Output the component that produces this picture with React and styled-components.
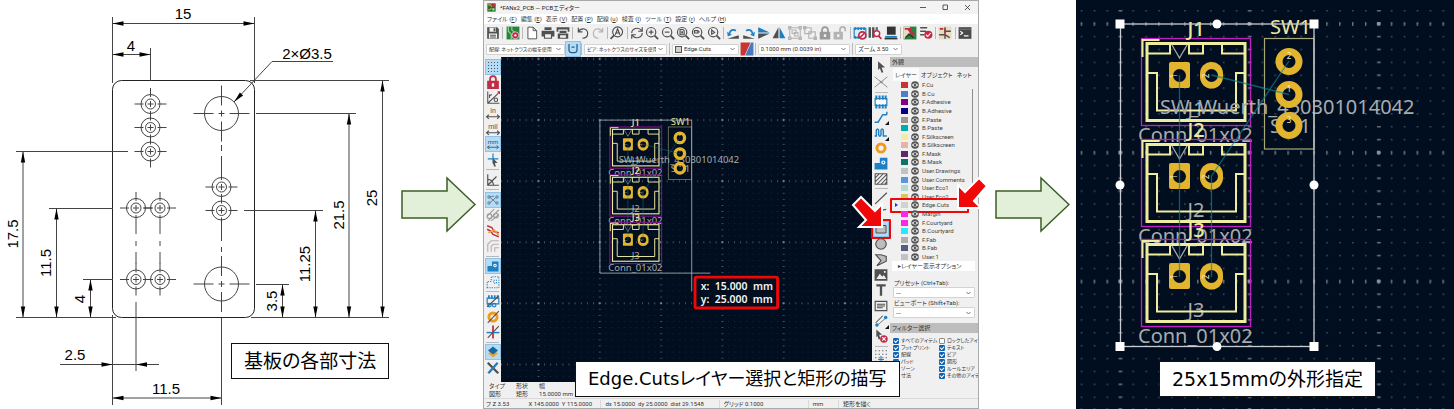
import React from 'react';
import styled, { createGlobalStyle, css } from 'styled-components';

const Global = createGlobalStyle`
  * { box-sizing: border-box; }
  body { margin: 0; background: #fff; font-family: "Roboto", "Noto Sans CJK JP", sans-serif; color: #333; }
  button, select, input { font: inherit; color: inherit; margin: 0; padding: 0; }
  svg { display: block; }
`;

/* ---------- page ---------- */

const Page = styled.main`
  display: flex;
  align-items: stretch;
  min-height: 100vh;
  overflow: hidden;
`;

const Panel = styled.figure`
  position: relative;
  flex: ${(p) => p.$grow} 1 0;
  min-width: 0;
  margin: 0;
  background: ${(p) => p.$bg || 'transparent'};
`;

const Caption = styled.figcaption`
  position: absolute;
  bottom: ${(p) => p.$bottom}px;
  left: ${(p) => p.$left}px;
  padding: 0 12px;
  border: 1px solid #111;
  background: #fff;
  color: #000;
  font-family: "DejaVu Sans", "Noto Sans CJK JP", sans-serif;
  font-size: ${(p) => (p.$long ? 18 : 19)}px;
  line-height: 34px;
  font-feature-settings: "palt";
  white-space: nowrap;
`;

const FullSvg = styled.svg`
  width: 100%;
  height: 100%;
`;

const StepArrowBox = styled.div`
  flex: none;
  align-self: center;
  margin: 0 ${(p) => p.$after}px 0 ${(p) => p.$before}px;
`;

const StepArrow = ({ before, after }) => (
  <StepArrowBox $before={before} $after={after}>
    <svg width="75" height="57" viewBox="0 0 75 57" aria-hidden="true">
      <path d="M1 15H46V2L74 28.500L46 55V42H1Z" fill="#e2f0d9" stroke="#3b5e26" strokeWidth="1.500" />
    </svg>
  </StepArrowBox>
);

/* ---------- dimension drawing ---------- */

const Tip = ({ x, y, a }) => (
  <path d="M0 0L-11 -2.200V2.200Z" transform={`translate(${x} ${y}) rotate(${a})`} fill="#000" stroke="none" />
);

const HDim = ({ x1, x2, y }) => (
  <g>
    <path d={`M${x1} ${y}H${x2}`} />
    <Tip x={x1} y={y} a={180} />
    <Tip x={x2} y={y} a={0} />
  </g>
);

const VDim = ({ x, y1, y2 }) => (
  <g>
    <path d={`M${x} ${y1}V${y2}`} />
    <Tip x={x} y={y1} a={-90} />
    <Tip x={x} y={y2} a={90} />
  </g>
);

const DimText = styled.text`
  font-family: "Liberation Sans", sans-serif;
  font-size: 15px;
  fill: #000;
  stroke: none;
  text-anchor: middle;
`;

const VText = ({ x, y, children }) => (
  <DimText transform={`translate(${x} ${y}) rotate(-90)`}>{children}</DimText>
);

const PIN_HOLES = [
  [150.5, 104], [150.5, 127.5], [150.5, 151.5],
  [136, 208], [160, 208], [136, 279.5], [160, 279.5],
  [221.5, 187], [221.5, 210.5],
];

const DimensionDrawing = () => (
  <FullSvg viewBox="0 0 401 409" role="img" aria-label="基板の各部寸法" fill="none" stroke="#444" strokeWidth="1">
    <rect x="112.500" y="80.500" width="142" height="237" rx="9" stroke="#222" />
    {PIN_HOLES.map(([x, y]) => (
      <g key={`${x}-${y}`}>
        <circle cx={x} cy={y} r="9.500" />
        <circle cx={x} cy={y} r="5" />
        <path d={`M${x - 3} ${y}h6M${x} ${y - 3}v6M${x - 16} ${y}h9M${x + 7} ${y}h9M${x} ${y - 16}v9M${x} ${y + 7}v9`} />
      </g>
    ))}
    {[113.5, 284].map((y) => (
      <g key={y}>
        <circle cx="221.500" cy={y} r="17" />
        <path d={`M193.500 ${y}h20M229.500 ${y}h20M218.500 ${y}h6M221.500 ${y - 3}v6M221.500 ${y - 28}v20M221.500 ${y + 8}v20`} />
      </g>
    ))}
    <path d="M221.500 145V151M221.500 156V178M221.500 219V241M221.500 247V252" />
    <path d="M136 224V234M136 241V246M136 252V264M160 224V234M160 241V246M160 252V264" />

    <path d="M112.500 17V83M254.500 17V83M150.500 48V81" />
    <HDim x1={112.5} x2={254.5} y={23.5} />
    <HDim x1={112.5} x2={150.5} y={54.5} />
    <DimText x="183" y="19">15</DimText>
    <DimText x="131" y="51">4</DimText>
    <path d="M333 61.500H272L234 102" />
    <Tip x={234} y={102} a={133} />
    <DimText x="307" y="59">2×Ø3.5</DimText>

    <path d="M16 151.500H128M49 208.500H113M83 279.500H113M16 317.500H116M251 317.500H389" />
    <VDim x={23} y1={151.5} y2={317.5} />
    <VDim x={56.5} y1={208.5} y2={317.5} />
    <VDim x={90.5} y1={279.5} y2={317.5} />
    <VText x={18} y={234}>17.5</VText>
    <VText x={51} y={263}>11.5</VText>
    <VText x={85} y={299}>4</VText>

    <path d="M250 80.500H389M256 113.500H356M244 210.500H323M256 284.500H289" />
    <VDim x={282.5} y1={284.5} y2={317.5} />
    <VDim x={315.5} y1={210.5} y2={317.5} />
    <VDim x={349} y1={113.5} y2={317.5} />
    <VDim x={382.5} y1={80.5} y2={317.5} />
    <VText x={277} y={301}>3.5</VText>
    <VText x={310} y={264}>11.25</VText>
    <VText x={344} y={215}>21.5</VText>
    <VText x={377} y={198}>25</VText>

    <path d="M112.500 315V405M136 302V371M221.500 318V405M60 364.500H159" />
    <Tip x={112.5} y={364.5} a={0} />
    <Tip x={136} y={364.5} a={180} />
    <HDim x1={112.5} x2={221.5} y={398} />
    <DimText x="75" y="360">2.5</DimText>
    <DimText x="166" y="394">11.5</DimText>
  </FullSvg>
);

/* ---------- board scene, shared by the editor canvas and the close-up ---------- */

const BOARD_BG = '#000e20';

const BoardText = styled.text`
  font-family: "Noto Sans", sans-serif;
  font-size: 20px;
  fill: ${(p) => (p.$silk ? '#efe99b' : '#a9abae')};
  stroke: none;
`;

const PadText = styled.text`
  font-family: "Noto Sans", sans-serif;
  font-size: 8px;
  fill: #f3ecd2;
  stroke: none;
  text-anchor: middle;
`;

const Connector = ({ n, y, dim }) => (
  <g transform={`translate(0 ${y})`} fill="none">
    <rect x="1141.500" y="38.500" width="109" height="87" stroke={dim ? '#7b1287' : '#c41cc4'} strokeWidth={dim ? 2.4 : 1.3} />
    <BoardText x="1138" y="142">Conn_01x02</BoardText>
    <BoardText x="1196" y="116" textAnchor="middle">{`J${n}`}</BoardText>
    <g stroke="#efeb9f" strokeWidth="2">
      <path d="M1142.500 57V40H1159.500" />
      <rect x="1147" y="43.500" width="98" height="77" strokeWidth={dim ? 2.4 : 3} />
      <path d="M1147 53.500H1170V44M1189 44V53.500H1203V44M1222 44V53.500H1245M1147 73H1157V110.500H1236V73H1245" />
    </g>
    <path d="M1172 45L1179.500 58L1187 45" stroke="#a5a8ad" strokeWidth="1.300" />
    <path d="M1171 62h17a2 2 0 0 1 2 2v22a2 2 0 0 1-2 2h-17a2 2 0 0 1-2-2v-22a2 2 0 0 1 2-2z" fill="#e3b52e" />
    <rect x="1200" y="62" width="23" height="26.500" rx="11.500" fill="#e3b52e" />
    <circle cx="1179.500" cy="75.500" r="6.500" fill={BOARD_BG} />
    <circle cx="1211.500" cy="75.500" r="6.500" fill={BOARD_BG} />
    <PadText transform="translate(1177 76) rotate(-90)">1</PadText>
    <PadText transform="translate(1209 76) rotate(-90)">2</PadText>
    <BoardText $silk x="1196" y="36" textAnchor="middle" fontWeight="500">{`J${n}`}</BoardText>
  </g>
);

const BoardScene = ({ id, dim }) => (
  <g>
    <defs>
      <pattern id={`${id}-minor`} x="1113.500" y="17" width="12.920" height="12.880" patternUnits="userSpaceOnUse">
        <rect x="6" y="6" width="1.600" height="1.400" fill={dim ? '#2b3a4c' : '#48515d'} />
      </pattern>
      <pattern id={`${id}-row`} x="1113.500" y="17" width="12.920" height="128.800" patternUnits="userSpaceOnUse">
        <rect x="6" y="5" width="1.300" height="4" fill="#69707a" />
      </pattern>
      <pattern id={`${id}-col`} x="1113.500" y="17" width="129.200" height="12.880" patternUnits="userSpaceOnUse">
        <rect x="5" y="6" width="4" height="1.300" fill="#69707a" />
      </pattern>
      <pattern id={`${id}-major`} x="1113.500" y="17" width="129.200" height="128.800" patternUnits="userSpaceOnUse">
        <rect x="5" y="5" width="3.500" height="3.500" fill="#8c9299" />
      </pattern>
    </defs>
    <rect x="800" y="-250" width="1300" height="1000" fill={BOARD_BG} />
    {['minor', 'row', 'col', 'major'].map((k) => (
      <rect key={k} x="800" y="-250" width="1300" height="1000" fill={`url(#${id}-${k})`} />
    ))}
    <Connector n={1} y={0} dim={dim} />
    <Connector n={2} y={101} dim={dim} />
    <Connector n={3} y={201} dim={dim} />
    <rect x="1264.500" y="38.500" width="49.500" height="110.500" fill="none" stroke="#aaa874" strokeWidth="1.200" />
    <BoardText $silk x="1270" y="34">SW1</BoardText>
    <BoardText x="1270" y="133">SW1</BoardText>
    <BoardText x="1160" y="114">SW_Wuerth_450301014042</BoardText>
    {[61.5, 94.5, 125.5].map((y, i) => (
      <g key={y}>
        <circle cx="1289" cy={y} r="10" fill={BOARD_BG} stroke="#e3b52e" strokeWidth="7" />
        <PadText x="1289" y={y - 3}>{[2, 1, 3][i]}</PadText>
      </g>
    ))}
    <path
      d="M1179.500 75V277M1211.500 176V277M1211.500 75L1289 94.500M1289 61L1211.500 176"
      stroke="#0f8290" strokeOpacity="0.700" strokeWidth="1.300" fill="none"
    />
  </g>
);

const HANDLES = [[1120, 24], [1314, 24], [1120, 346.5], [1314, 346.5]];
const MID_HANDLES = [[1217, 24], [1217, 346.5], [1120, 185], [1314, 185]];

const BoardCloseUp = () => (
  <FullSvg viewBox="1076 0 378 409" preserveAspectRatio="xMidYMid slice" role="img" aria-label="25x15mmの外形指定">
    <BoardScene id="close" />
    <rect x="1120.500" y="24" width="193.500" height="322.500" fill="none" stroke="#c9ccd0" strokeWidth="1.300" />
    {HANDLES.map(([x, y]) => (
      <rect key={`${x}-${y}`} x={x - 4.5} y={y - 4.5} width="9" height="9" fill="#fff" />
    ))}
    {MID_HANDLES.map(([x, y]) => (
      <circle key={`${x}-${y}`} cx={x} cy={y} r="4.500" fill="#fff" />
    ))}
  </FullSvg>
);

/* ---------- icons, all on a 24 unit square ---------- */

const D = '#505050';
const B = '#1f7fc4';
const R = '#c22b45';
const G = '#b4b4b4';

const lens = (inner) => (
  <g fill="none" stroke={D} strokeWidth="2">
    <circle cx="10.500" cy="10.500" r="8" />
    <path d="M16.500 16.500L22.500 22.500" strokeWidth="3" />
    {inner}
  </g>
);

const rot = (
  <g>
    <path d="M2 22H22V16Z" fill={D} />
    <path d="M6 13C7 7 12 5 17 8" fill="none" stroke={B} strokeWidth="3" />
    <path d="M2 10L10 15L3 18Z" fill={B} />
  </g>
);

const unit = (label) => (
  <g>
    <text x="12" y="12" fontSize="12" textAnchor="middle" fill={D} fontFamily="Roboto, sans-serif">{label}</text>
    <path d="M1 18.500H23M5 15L1 18.500L5 22M19 15L23 18.500L19 22" fill="none" stroke={D} strokeWidth="1.800" />
  </g>
);

const ICONS = {
  save: <path fill={D} fillRule="evenodd" d="M2 2H19L22 5V22H2ZM6 3V10H17V3ZM13 4H16V9H13ZM5 13V21H19V13ZM7 15H17V16.500H7ZM7 18H17V19.500H7Z" />,
  board: (
    <g>
      <path d="M1 1H23V23H1Z" fill="#26853a" />
      <path d="M4 1V9L9 14V23M10 1V7L15 11" fill="none" stroke="#9ad19a" strokeWidth="2" />
      <circle cx="16" cy="16" r="6" fill={R} stroke="#fff" />
      <circle cx="16" cy="16" r="2" fill="#fff" />
    </g>
  ),
  page: <path d="M5 2H14L20 8V22H5ZM14 2V8H20" fill="#fff" stroke={D} strokeWidth="1.600" />,
  print: <path fill={D} fillRule="evenodd" d="M6 2H18V7H6ZM1 8H23V18H19V22H5V18H1ZM7 14V20H17V14Z" />,
  plot: <path fill={D} fillRule="evenodd" d="M1 2H23V10H20V6H4V10H1ZM6 8H18V12H6ZM3 13H21V22H3ZM7 16V20H17V16Z" />,
  undo: <path d="M4 3V10H11M4 10C9 2 20 4 20 13C20 18 16 21 11 21" fill="none" stroke={D} strokeWidth="2" />,
  redo: <path d="M20 3V10H13M20 10C15 2 4 4 4 13C4 18 8 21 13 21" fill="none" stroke={G} strokeWidth="2" />,
  find: (
    <g fill="none" stroke={D} strokeWidth="2">
      <circle cx="13" cy="10" r="8.500" />
      <path d="M7 16L1 22" strokeWidth="3" />
      <path d="M9 15L13 5L17 15M10.500 12H15.500" />
    </g>
  ),
  refresh: <path d="M3 12C3 5 14 0 20 8M21 2V9H14M21 12C21 19 10 24 4 16M3 22V15H10" fill="none" stroke={D} strokeWidth="2" />,
  zoomIn: lens(<path d="M6.500 10.500H14.500M10.500 6.500V14.500" />),
  zoomOut: lens(<path d="M6.500 10.500H14.500" />),
  zoomFit: lens(<path d="M7 6H12L14 8V15H7ZM9 10H12M9 12H12" />),
  zoomObj: lens(<path d="M6 8H12V12H6ZM12 10H15" />),
  zoomSel: lens(<path d="M8 7V14L13 11Z" />),
  rotL: rot,
  rotR: <g transform="translate(24 0) scale(-1 1)">{rot}</g>,
  mirrorV: <g><path d="M2 2V11H22Z" fill={B} /><path d="M2 22V13H22Z" fill={D} /></g>,
  mirrorH: <g><path d="M11 2V21H1Z" fill={D} /><path d="M13 2V21H23Z" fill={B} /></g>,
  group: <path d="M3 3H21V21H3ZM1 1H5V5H1ZM19 1H23V5H19ZM1 19H5V23H1ZM19 19H23V23H19ZM7 7H14V13H7ZM11 11H17V17H11Z" fill="none" stroke={G} strokeWidth="1.800" />,
  ungroup: <path d="M3 3H14V13H3ZM10 10H21V21H10ZM1 1H5V5H1ZM19 19H23V23H19Z" fill="none" stroke={G} strokeWidth="2" />,
  lock: <g><path d="M7 11V7A5 5 0 0 1 17 7V11" fill="none" stroke="#999" strokeWidth="3" /><path fillRule="evenodd" d="M3 10H21V23H3ZM10 14V19H14V14Z" fill="#999" /></g>,
  unlock: <g><path d="M12 11V6A4.500 4.500 0 0 1 21 6V9" fill="none" stroke={G} strokeWidth="3" /><path fillRule="evenodd" d="M1 10H17V23H1ZM7 14V19H11V14Z" fill={G} /></g>,
  fpEdit: (
    <g>
      <path d="M2 4H22V20H2Z" fill="#d9ecf8" stroke={B} strokeWidth="2" />
      <path d="M4 2V7M9 2V7M14 2V7M19 2V7M4 17V22M9 17V22" stroke={B} strokeWidth="3" />
      <circle cx="16" cy="16" r="6" fill="#fff" stroke={R} strokeWidth="3" />
      <path d="M12 20L20 12" stroke={R} strokeWidth="3" />
    </g>
  ),
  library: (
    <g>
      <path d="M1 2H5V20H1ZM7 2H11V20H7Z" fill={D} />
      <path d="M13 2L17 2V12H13Z" fill={B} />
      <circle cx="15" cy="13" r="5" fill="#fff" stroke={R} strokeWidth="2.500" />
      <path d="M18 17L23 22" stroke={R} strokeWidth="3" />
    </g>
  ),
  board3d: <g><path d="M5 1H20V15H5Z" fill="#333" /><path d="M2 17H22V20H2Z" fill={B} /><path d="M1 20H23V23H1Z" fill="#333" /></g>,
  update: (
    <g>
      <path d="M1 1H23V23H1Z" fill="#26853a" />
      <path d="M1 1H12V12L1 23Z" fill="#e8dcc0" />
      <path d="M3 5H9L16 16M12 3V9L20 14" fill="none" stroke={R} strokeWidth="3" />
      <path d="M4 20L10 14L18 20" fill="none" stroke="#333" strokeWidth="2.500" />
    </g>
  ),
  appLogo: (
    <g>
      <path d="M1 1H23V23H1Z" fill="#1f6b34" />
      <path d="M2 5H9L13 10M2 18H8L12 14" fill="none" stroke="#d9a12b" strokeWidth="3" />
      <path d="M13 2H22V10H15Z" fill={R} />
      <circle cx="17" cy="17" r="3.500" fill="#8fcf8f" />
    </g>
  ),
  drc: (
    <g>
      <path d="M2 3H14M2 9H12M2 15H9" stroke={D} strokeWidth="2.500" />
      <circle cx="16" cy="15" r="7" fill={R} />
      <path d="M12 15L15 18L20 12" fill="none" stroke="#fff" strokeWidth="2" />
    </g>
  ),
  schematic: <g><path d="M1 1H23V23H1Z" fill="#e8dcc0" /><path d="M12 2V22M12 9H22M2 15H12L20 20" fill="none" stroke={D} strokeWidth="2.500" /><path d="M3 5H9M12 5V12" stroke={R} strokeWidth="3" /></g>,
  terminal: <g><path d="M1 2H23V22H1Z" fill="#4a4a4a" /><path d="M4 9L8 12L4 15M10 17H18" fill="none" stroke="#fff" strokeWidth="2" /><path d="M1 5.500H23" stroke="#999" /></g>,
  grid: <path d="M2 3H24M2 9H24M2 15H24M2 21H24" stroke={D} strokeWidth="2" strokeDasharray="2 4" />,
  gridLock: <g><path d="M7 11V7A5 5 0 0 1 17 7V11" fill="none" stroke={R} strokeWidth="3" /><path fillRule="evenodd" d="M2 10H22V24H2ZM10 14V20H14V14Z" fill={R} /></g>,
  polar: <g fill="none" stroke={D} strokeWidth="1.800"><path d="M3 1V21H23M3 21L21 4M6 6V12M6 8L10 6" /><circle cx="17" cy="15" r="3" /><path d="M20 2L23 2V5" stroke={R} strokeWidth="3" /></g>,
  inch: unit('in'),
  mil: unit('mil'),
  mm: unit('mm'),
  cursor: <g><path d="M12 1V18M3 10H21" stroke={B} strokeWidth="2" /><path d="M12 9L20 17L15 17L17 23L14 23L12 18Z" fill={D} /></g>,
  angle: <path d="M3 2V21H22M3 21L18 6M3 11C8 11 12 15 13 21" fill="none" stroke={D} strokeWidth="2" />,
  rats: <g fill="none" stroke="#5d7788" strokeWidth="1.800"><path d="M5 6L19 18M5 18L19 6M5 6L14 4" /><circle cx="4" cy="6" r="2.500" /><circle cx="20" cy="6" r="2.500" /><circle cx="4" cy="18" r="2.500" /><circle cx="20" cy="18" r="2.500" /></g>,
  curved: <g fill="none" stroke="#9c9c9c" strokeWidth="2"><path d="M4 22L22 3M2 14L14 2M9 22L22 11" /><circle cx="6" cy="14" r="4" /><circle cx="17" cy="13" r="4" /></g>,
  tracks: <g fill="none" stroke={R} strokeWidth="2.500"><path d="M2 3L10 6L14 13L22 15M2 9L8 12L12 18L22 22" /><path d="M4 15L14 10L22 20" stroke="#e9a52e" /></g>,
  dimTracks: <path d="M3 22V9L9 3H22M9 22V12L13 9H22M15 22V15H22" fill="none" stroke="#b9b0ae" strokeWidth="2" />,
  zoneFill: <g><path d="M1 23V12H10V3H23V23Z" fill={B} /><circle cx="16" cy="11" r="3.500" fill="#fff" /><circle cx="16" cy="11" r="1.500" fill={B} /></g>,
  zoneLine: <path d="M2 22V11H9V3H22V22ZM13 9H18V14H13Z" fill="none" stroke={B} strokeWidth="1.800" strokeDasharray="2 2" />,
  sketchFp: <g fill="none" stroke={B} strokeWidth="2"><path d="M2 7H22V17H2Z" /><path d="M5 2V8M10 2V8M15 2V8M20 2V8" strokeWidth="3" /><circle cx="6" cy="19" r="3" /><circle cx="14" cy="19" r="3" /><path d="M2 22L22 3" stroke={D} /></g>,
  sketchPad: <g fill="none"><circle cx="12" cy="12" r="7" stroke="#f09a1c" strokeWidth="5" /><path d="M3 22L22 2" stroke={D} strokeWidth="1.800" /></g>,
  sketchTrack: <g fill="none"><path d="M12 1V23" stroke={R} strokeWidth="3" /><path d="M1 13H23" stroke={B} strokeWidth="2.500" /><path d="M3 22L22 2" stroke={D} strokeWidth="1.800" /></g>,
  layers: <g><path d="M12 8L22 15L12 23L2 15Z" fill="#e9a52e" /><path d="M12 1L22 9L12 17L2 9Z" fill="#17669f" /></g>,
  tools: <g fill="none" strokeWidth="4"><path d="M3 3L21 21" stroke={D} /><path d="M20 3L4 21" stroke={B} /></g>,
  pick: <path d="M7 2L19 13H13L16 21L13 22L10 14L7 17Z" fill={D} />,
  localRats: <path d="M1 3L23 21M1 21L23 3M10 9L12 14L16 11" fill="none" stroke="#8b8b8b" strokeWidth="1.600" />,
  footprint: <g><path d="M2 6H22V18H2Z" fill="#fff" stroke={B} strokeWidth="2" /><path d="M4 1V8M9.500 1V8M15 1V8M20 1V8M4 16V23M9.500 16V23M15 16V23M20 16V23" stroke={B} strokeWidth="3.500" /></g>,
  route: <path d="M1 21H7L15 8H22M22 8V3" fill="none" stroke={B} strokeWidth="2.500" />,
  meander: <path d="M1 17H4V7Q6 3 8 7V15Q10 20 12 15V7Q14 3 16 7V17H22" fill="none" stroke={B} strokeWidth="2.500" />,
  via: <circle cx="12" cy="12" r="7" fill="none" stroke="#f09a1c" strokeWidth="5" />,
  hatch: <g stroke={D} strokeWidth="1.800" fill="none"><path d="M2 3H22V21H2ZM2 10L9 3M2 17L16 3M5 21L22 4M12 21L22 11M18 21L22 17" /></g>,
  line: <path d="M2 22L22 3" stroke={D} strokeWidth="2" />,
  arc: <path d="M3 21C3 11 11 4 21 4" fill="none" stroke={D} strokeWidth="2" />,
  rect: <path d="M2 5H22V20H2Z" fill="#bdbdbd" stroke={D} strokeWidth="2" />,
  circle: <circle cx="12" cy="12" r="9" fill="#bdbdbd" stroke={D} strokeWidth="2" />,
  poly: <path d="M3 3H12L21 6V14L5 22L12 13Z" fill="#bdbdbd" stroke={D} strokeWidth="2" />,
  image: <path fill={D} fillRule="evenodd" d="M1 2H23V22H1ZM4 19L10 10L14 15L17 12L21 19ZM17 5V8H20V5Z" />,
  text: <path d="M4 4H20M12 4V22" stroke={D} strokeWidth="4" />,
  textbox: <path d="M2 4H22V20H2ZM5 9H19M5 12H19M5 15H15" fill="none" stroke={D} strokeWidth="2" />,
  dim: <g><path d="M3 15L15 3" stroke={D} strokeWidth="1.800" /><path d="M5 20L20 7" stroke={D} strokeWidth="1.200" /><circle cx="5" cy="19" r="3" fill={B} /><circle cx="20" cy="6" r="3" fill={B} /></g>,
  erase: <g><path d="M4 1L14 10H9L11 17L8 18L6 12L4 14Z" fill={D} /><circle cx="17" cy="17" r="6.500" fill={R} /><path d="M14 14L20 20M20 14L14 20" stroke="#fff" strokeWidth="2" /></g>,
  gridOrigin: <g><path d="M2 3H24M2 9H24M2 15H24M2 21H24" stroke={D} strokeWidth="2" strokeDasharray="2 4" /><path d="M12 12V23M7 18H17" stroke={B} strokeWidth="2" /></g>,
  trackMode: <path d="M4 2V14Q4 19 9 19H15Q20 19 20 14V2M9 8H15" fill="none" stroke="#2a5c86" strokeWidth="2.500" />,
  layerPair: <g><path d="M1 1H18L8 23H1Z" fill="#c8372f" /><path d="M19 1H23V23H9Z" fill="#4a78c2" /></g>,
};

const Icon = ({ name, size = 14 }) => (
  <svg width={size} height={size} viewBox="0 0 24 24" aria-hidden="true">{ICONS[name]}</svg>
);

/* ---------- editor window ---------- */

const Window = styled.section`
  display: flex;
  flex-direction: column;
  min-height: 100%;
  border: 1px solid #a9a9a9;
  background: #f0f0f0;
  font-size: 6px;
  line-height: 8px;
  font-feature-settings: "palt";
  white-space: nowrap;
`;

const TitleBar = styled.header`
  display: flex;
  align-items: center;
  height: 13px;
  padding: 0 8px 0 3px;
  gap: 4px;
  background: #f3f3f3;
`;

const Title = styled.h1`
  flex: 1;
  margin: 0;
  font-size: 6px;
  font-weight: 400;
  color: #222;
`;

const PlainButton = styled.button`
  display: grid;
  place-items: center;
  place-content: center;
  border: 0;
  background: none;
`;

const WinControls = styled.div`
  display: flex;
  gap: 16px;
`;

const MenuBar = styled.nav`
  display: flex;
  gap: 4px;
  height: 10px;
  padding: 0 3px;
  background: #fff;
`;

const MenuButton = styled(PlainButton)`
  white-space: pre;
`;

const Toolbar = styled.div`
  display: flex;
  align-items: center;
  justify-content: space-between;
  height: 17px;
  padding: 0 7px 0 3px;
`;

const OptionBar = styled.div`
  display: flex;
  align-items: center;
  gap: 2px;
  height: 16px;
  padding: 0 76px 0 2px;
`;

const VDivider = styled.span`
  width: 1px;
  height: 12px;
  background: #b9b9b9;
`;

const HDivider = styled.span`
  width: 13px;
  height: 1px;
  background: #b9b9b9;
`;

const ToolButton = styled(PlainButton)`
  position: relative;
  width: 12px;
  height: 12px;
  ${(p) => p.$on && css`
    background: #b5dcf6;
    box-shadow: 0 0 0 1px #b5dcf6, 0 0 0 2px #8fc3e8;
  `}
`;

const Field = styled.span`
  display: flex;
  align-items: center;
  flex: ${(p) => p.$grow || 1} 1 0;
  min-width: 0;
  height: 11px;
  padding: 0 3px 0 2px;
  gap: 2px;
  border: 1px solid #d3d3d3;
  border-radius: 1px;
  background: #fff;
`;

const Select = styled.select`
  flex: 1;
  min-width: 0;
  height: 9px;
  border: 0;
  background: transparent;
  appearance: none;
  font-size: ${(p) => (p.$tight ? 5 : 6)}px;
`;

const Swatch = styled.span`
  flex: none;
  width: 7px;
  height: ${(p) => p.$h || 6}px;
  background: ${(p) => p.$c};
  ${(p) => p.$framed && 'border: 1px solid #555;'}
`;

const Chevron = () => (
  <svg width="5" height="4" viewBox="0 0 5 4" aria-hidden="true">
    <path d="M0.500 1L2.500 3L4.500 1" fill="none" stroke="#555" strokeWidth="0.800" />
  </svg>
);

const Combo = ({ label, id, value, grow, swatch, tight }) => (
  <Field $grow={grow}>
    {swatch && <Swatch $c={swatch} $h={7} $framed />}
    <Select id={id} aria-label={label} defaultValue={value} $tight={tight}>
      <option>{value}</option>
    </Select>
    <Chevron />
  </Field>
);

const Body = styled.div`
  display: flex;
  flex: 1;
  min-height: 325px;
`;

const SideBar = styled.div`
  display: flex;
  flex: none;
  flex-direction: column;
  align-items: center;
  justify-content: space-between;
  width: ${(p) => p.$w}px;
  padding: 4px 0 ${(p) => p.$end}px;
`;

const Canvas = styled.div`
  flex: 1;
  min-width: 0;
  overflow: hidden;
  background: ${BOARD_BG};
`;

const ReadoutText = styled.text`
  font-family: "Noto Sans", sans-serif;
  font-size: 22px;
  font-weight: 600;
  fill: #f4f4f4;
  white-space: pre;
`;

const EditorCanvas = () => (
  <FullSvg viewBox="911 -109 784 685" preserveAspectRatio="xMidYMid slice" role="img" aria-label="PCB">
    <BoardScene id="editor" dim />
    <path d="M1120.500 24H1314V385M1120.500 24V346.500H1353" fill="none" stroke="#a9adb2" strokeWidth="1.800" />
    <rect x="1321" y="355" width="174" height="65" rx="3" fill={BOARD_BG} stroke="#f00808" strokeWidth="6" />
    <ReadoutText x="1333" y="382">x:  15.000  mm</ReadoutText>
    <ReadoutText x="1333" y="409">y:  25.000  mm</ReadoutText>
  </FullSvg>
);

const Marker = styled.span`
  position: absolute;
  inset: ${(p) => p.$inset};
  border: 2px solid #f00808;
  border-radius: 1px;
  pointer-events: none;
`;

const RedArrow = styled.svg`
  position: absolute;
  right: ${(p) => p.$right}px;
  bottom: ${(p) => p.$bottom}px;
  z-index: 2;
  pointer-events: none;
`;

const FlyMark = styled.svg`
  position: absolute;
  right: -2px;
  bottom: -2px;
`;

const Appearance = styled.aside`
  display: flex;
  flex-direction: column;
  flex: none;
  width: 88px;
`;

const PanelHead = styled.h2`
  margin: 0;
  padding: 0 2px;
  font-size: 6px;
  font-weight: 400;
  line-height: 10px;
  background: #bdbdbd;
`;

const Tabs = styled.div`
  display: flex;
  height: 14px;
  padding: 1px 3px 0;
`;

const Tab = styled(PlainButton)`
  padding: 0 2px;
  ${(p) => p.$on && 'background: #fbfbfb;'}
`;

const LayerArea = styled.div`
  display: flex;
  flex: 1;
  padding: 0 5px 0 0;
`;

const LayerList = styled.ul`
  display: flex;
  flex: 1;
  flex-direction: column;
  margin: 0;
  padding: 0;
  list-style: none;
`;

const LayerRow = styled.li`
  position: relative;
  display: flex;
  flex: 1;
  align-items: center;
  gap: 3px;
  min-height: 8px;
  padding-left: 11px;
  color: #444;
`;

const Current = styled.i`
  position: absolute;
  left: 5px;
  border: solid transparent;
  border-width: 2px 0 2px 3px;
  border-left-color: #2b2bd8;
`;

const ScrollThumb = styled.span`
  width: 1px;
  height: 95px;
  margin-top: 8px;
  background: #8d8d8d;
`;

const Disclosure = styled(PlainButton)`
  justify-content: start;
  height: 10px;
  padding-left: 6px;
  margin: 0 3px 0 2px;
  background: #fff;
`;

const PresetGroup = styled.div`
  display: flex;
  flex-direction: column;
  padding: 8px 3px 4px;
  label { padding-left: 1px; }
  label + span { flex: none; margin-bottom: 1px; }
`;

const Filters = styled.div`
  display: grid;
  grid-template-columns: 46px 1fr;
  grid-auto-rows: 7px;
  padding: 4px 0 3px 3px;
  overflow: hidden;
  font-size: 5px;
`;

const FilterLabel = styled.label`
  display: flex;
  align-items: center;
  gap: 2px;
  line-height: 7px;
`;

const Check = styled.input`
  flex: none;
  display: grid;
  width: 6px;
  height: 6px;
  appearance: none;
  border: 1px solid #8c8c8c;
  border-radius: 1px;
  background: #fff;
  &:checked { background: #0f62b4; border-color: #0f62b4; }
  &:checked::after {
    content: "";
    width: 3px;
    height: 2px;
    border: solid #fff;
    border-width: 0 0 1px 1px;
    transform: rotate(-45deg);
  }
`;

const InfoBar = styled.dl`
  display: flex;
  gap: 11px;
  height: 16px;
  margin: 0;
  padding: 0 5px;
  dt, dd { margin: 0; }
`;

const StatusBar = styled.footer`
  display: flex;
  align-items: center;
  height: 10px;
  border-top: 1px solid #d9d9d9;
`;

const StatusCell = styled.span`
  flex: ${(p) => p.$w} 1 0;
  min-width: 0;
  padding-left: ${(p) => p.$pad || 4}px;
  border-left: 1px solid ${(p) => (p.$first ? 'transparent' : '#d9d9d9')};
  white-space: pre;
`;

const MENUS = [
  ['ファイル', 'F'], ['編集', 'E'], ['表示', 'V'], ['配置', 'P'], ['配線', 'u'],
  ['検査', 'I'], ['ツール', 'T'], ['設定', 'r'], ['ヘルプ', 'H'],
];

const TOP_TOOLS = ['save', '|', 'board', '|', 'page', 'print', 'plot', '|', 'undo', 'redo', '|', 'find', '|',
  'refresh', 'zoomIn', 'zoomOut', 'zoomFit', 'zoomObj', 'zoomSel', '|', 'rotL', 'rotR', 'mirrorV', 'mirrorH',
  'group', 'ungroup', 'lock', 'unlock', '|', 'fpEdit', 'library', 'board3d', '|', 'update', 'drc', '|',
  'schematic', '|', 'terminal'];

const LEFT_TOOLS = ['grid*', 'gridLock', 'polar', 'inch', 'mil', 'mm*', 'cursor', '|', 'angle', '|', 'rats*',
  'curved', 'tracks', 'dimTracks', '|', 'zoneFill*', 'zoneLine', '|', 'sketchFp', 'sketchPad', 'sketchTrack',
  '|', 'layers*', 'tools'];

const RIGHT_TOOLS = ['pick', 'localRats', '|', 'footprint', 'route', 'meander', 'via', 'zoneFill', 'hatch', '|',
  'line', 'arc', 'rect*', 'circle', 'poly', 'image', 'text', 'textbox', 'dim', 'erase', '|', 'gridOrigin'];

const FLYOUTS = ['route', 'meander', 'dim'];

const LAYERS = [
  ['F.Cu', '#c83434'], ['B.Cu', '#4d7fc4'], ['F.Adhesive', '#840084'], ['B.Adhesive', '#000084'],
  ['F.Paste', '#a5948c'], ['B.Paste', '#00adad'], ['F.Silkscreen', '#f2eda1'], ['B.Silkscreen', '#e8b2a7'],
  ['F.Mask', '#5b2a6b'], ['B.Mask', '#0b7468'], ['User.Drawings', '#c2c2c2'], ['User.Comments', '#5994dc'],
  ['User.Eco1', '#b4dbd2'], ['User.Eco2', '#d8c852'], ['Edge.Cuts', '#d0d2cd'], ['Margin', '#ff26e2'],
  ['F.Courtyard', '#ff26e2'], ['B.Courtyard', '#26e9ff'], ['F.Fab', '#afafaf'], ['B.Fab', '#585d84'],
  ['User.1', '#c2c2c2'],
];

const FILTERS = ['すべてのアイテム', 'ロックしたアイテ', 'フットプリント', 'テキスト', '配線', 'ビア',
  'パッド', '図形', 'ゾーン', 'ルールエリア', '寸法', 'その他のアイテ'];

const Eye = () => (
  <svg width="8" height="8" viewBox="0 0 24 24" aria-hidden="true">
    <circle cx="12" cy="12" r="11.500" fill="#555" />
    <path d="M2 12Q12 2 22 12Q12 22 2 12Z" fill="#f0f0f0" />
    <circle cx="12" cy="12" r="4" fill="#555" />
  </svg>
);

const ARROW_PATH = 'M2 10L10 2L24 16L31 9V32H8L15 25Z';

const Tool = ({ spec }) => {
  const on = spec.endsWith('*');
  const name = on ? spec.slice(0, -1) : spec;
  return (
    <ToolButton type="button" $on={on} aria-label={name}>
      <Icon name={name} size={on ? 12 : 14} />
      {FLYOUTS.includes(name) && (
        <FlyMark width="4" height="4" viewBox="0 0 4 4" aria-hidden="true"><path d="M4 0V4H0Z" fill="#111" /></FlyMark>
      )}
      {name === 'rect' && (
        <>
          <Marker $inset="-4px" />
          <RedArrow $right={3} $bottom={6} width="33" height="34" viewBox="0 0 33 34" aria-hidden="true">
            <path d={ARROW_PATH} fill="#f00808" stroke="#fff" strokeWidth="2" />
          </RedArrow>
        </>
      )}
    </ToolButton>
  );
};

const EditorWindow = () => (
  <Window>
    <TitleBar>
      <Icon name="appLogo" size={9} />
      <Title>*FANx2_PCB — PCBエディター</Title>
      <WinControls>
        {['M0 3.500H6', 'M1 1H5.500V5.500H1Z', 'M1 1L6 6M6 1L1 6'].map((d, i) => (
          <PlainButton key={d} type="button" aria-label={['最小化', '最大化', '閉じる'][i]}>
            <svg width="6" height="7" viewBox="0 0 6 7"><path d={d} fill="none" stroke="#333" strokeWidth="0.800" /></svg>
          </PlainButton>
        ))}
      </WinControls>
    </TitleBar>
    <MenuBar>
      {MENUS.map(([name, key]) => (
        <MenuButton key={name} type="button"><span>{name} (<u>{key}</u>)</span></MenuButton>
      ))}
    </MenuBar>
    <Toolbar>
      {TOP_TOOLS.map((t, i) => (t === '|' ? <VDivider key={i} /> : <Tool key={t} spec={t} />))}
    </Toolbar>
    <OptionBar>
      <Combo id="track" label="配線幅" value="配線: ネットクラスの幅を使用" grow={80} tight />
      <Tool spec="trackMode*" />
      <VDivider />
      <Combo id="via" label="ビア" value="ビア: ネットクラスのサイズを使用" grow={84} tight />
      <VDivider />
      <Combo id="layer" label="レイヤー" value="Edge.Cuts" grow={66} swatch="#d0d2cd" />
      <Tool spec="layerPair" />
      <VDivider />
      <Combo id="gridsize" label="グリッド" value="0.1000 mm (0.0039 in)" grow={95} />
      <VDivider />
      <Combo id="zoom" label="ズーム" value="ズーム 3.50" grow={44} />
    </OptionBar>
    <Body>
      <SideBar $w={17} $end={8}>
        {LEFT_TOOLS.map((t, i) => (t === '|' ? <HDivider key={i} /> : <Tool key={t} spec={t} />))}
      </SideBar>
      <Canvas><EditorCanvas /></Canvas>
      <SideBar $w={18} $end={20}>
        {RIGHT_TOOLS.map((t, i) => (t === '|' ? <HDivider key={i} /> : <Tool key={t} spec={t} />))}
      </SideBar>
      <Appearance>
        <PanelHead>外観</PanelHead>
        <Tabs>
          <Tab type="button" $on>レイヤー</Tab>
          <Tab type="button">オブジェクト</Tab>
          <Tab type="button">ネット</Tab>
        </Tabs>
        <LayerArea>
          <LayerList>
            {LAYERS.map(([name, color]) => (
              <LayerRow key={name}>
                {name === 'Edge.Cuts' && <Current />}
                <Swatch $c={color} />
                <Eye />
                <span>{name}</span>
                {name === 'Edge.Cuts' && (
                  <>
                    <Marker $inset="-3px 3px -3px 0" />
                    <RedArrow $right={-17} $bottom={0} width="33" height="34" viewBox="0 0 33 34" aria-hidden="true">
                      <path d={ARROW_PATH} transform="translate(33 0) scale(-1 1)" fill="#f00808" stroke="#fff" strokeWidth="2" />
                    </RedArrow>
                  </>
                )}
              </LayerRow>
            ))}
          </LayerList>
          <ScrollThumb />
        </LayerArea>
        <Disclosure type="button">▸レイヤー表示オプション</Disclosure>
        <PresetGroup>
          <label htmlFor="preset">プリセット (Ctrl+Tab):</label>
          <Combo id="preset" value="---" />
          <label htmlFor="viewport">ビューポート (Shift+Tab):</label>
          <Combo id="viewport" value="---" />
        </PresetGroup>
        <PanelHead>フィルター選択</PanelHead>
        <Filters>
          {FILTERS.map((f, i) => (
            <FilterLabel key={f}>
              <Check type="checkbox" defaultChecked={i !== 1} />
              {f}
            </FilterLabel>
          ))}
        </Filters>
      </Appearance>
    </Body>
    <InfoBar>
      <div><dt>タイプ</dt><dd>図形</dd></div>
      <div><dt>形状</dt><dd>矩形</dd></div>
      <div><dt>幅</dt><dd>15.0000 mm</dd></div>
    </InfoBar>
    <StatusBar>
      <StatusCell $w={40} $pad={1} $first>フ Z 3.53</StatusCell>
      <StatusCell $w={77} $first>X 145.0000  Y 115.0000</StatusCell>
      <StatusCell $w={121}>dx 15.0000  dy 25.0000  dist 29.1548</StatusCell>
      <StatusCell $w={90}>グリッド 0.1000</StatusCell>
      <StatusCell $w={27}>mm</StatusCell>
      <StatusCell $w={82}>矩形を描く</StatusCell>
      <StatusCell $w={57} />
    </StatusBar>
  </Window>
);

export default function App() {
  return (
    <>
      <Global />
      <Page>
        <Panel $grow={401}>
          <DimensionDrawing />
          <Caption $left={231} $bottom={30}>基板の各部寸法</Caption>
        </Panel>
        <StepArrow before={0} after={7} />
        <Panel $grow={496}>
          <EditorWindow />
          <Caption $left={92} $bottom={12} $long>Edge.Cutsレイヤー選択と矩形の描写</Caption>
        </Panel>
        <StepArrow before={16} after={6} />
        <Panel $grow={378} $bg={BOARD_BG}>
          <BoardCloseUp />
          <Caption $left={83} $bottom={12}>25x15mmの外形指定</Caption>
        </Panel>
      </Page>
    </>
  );
}
